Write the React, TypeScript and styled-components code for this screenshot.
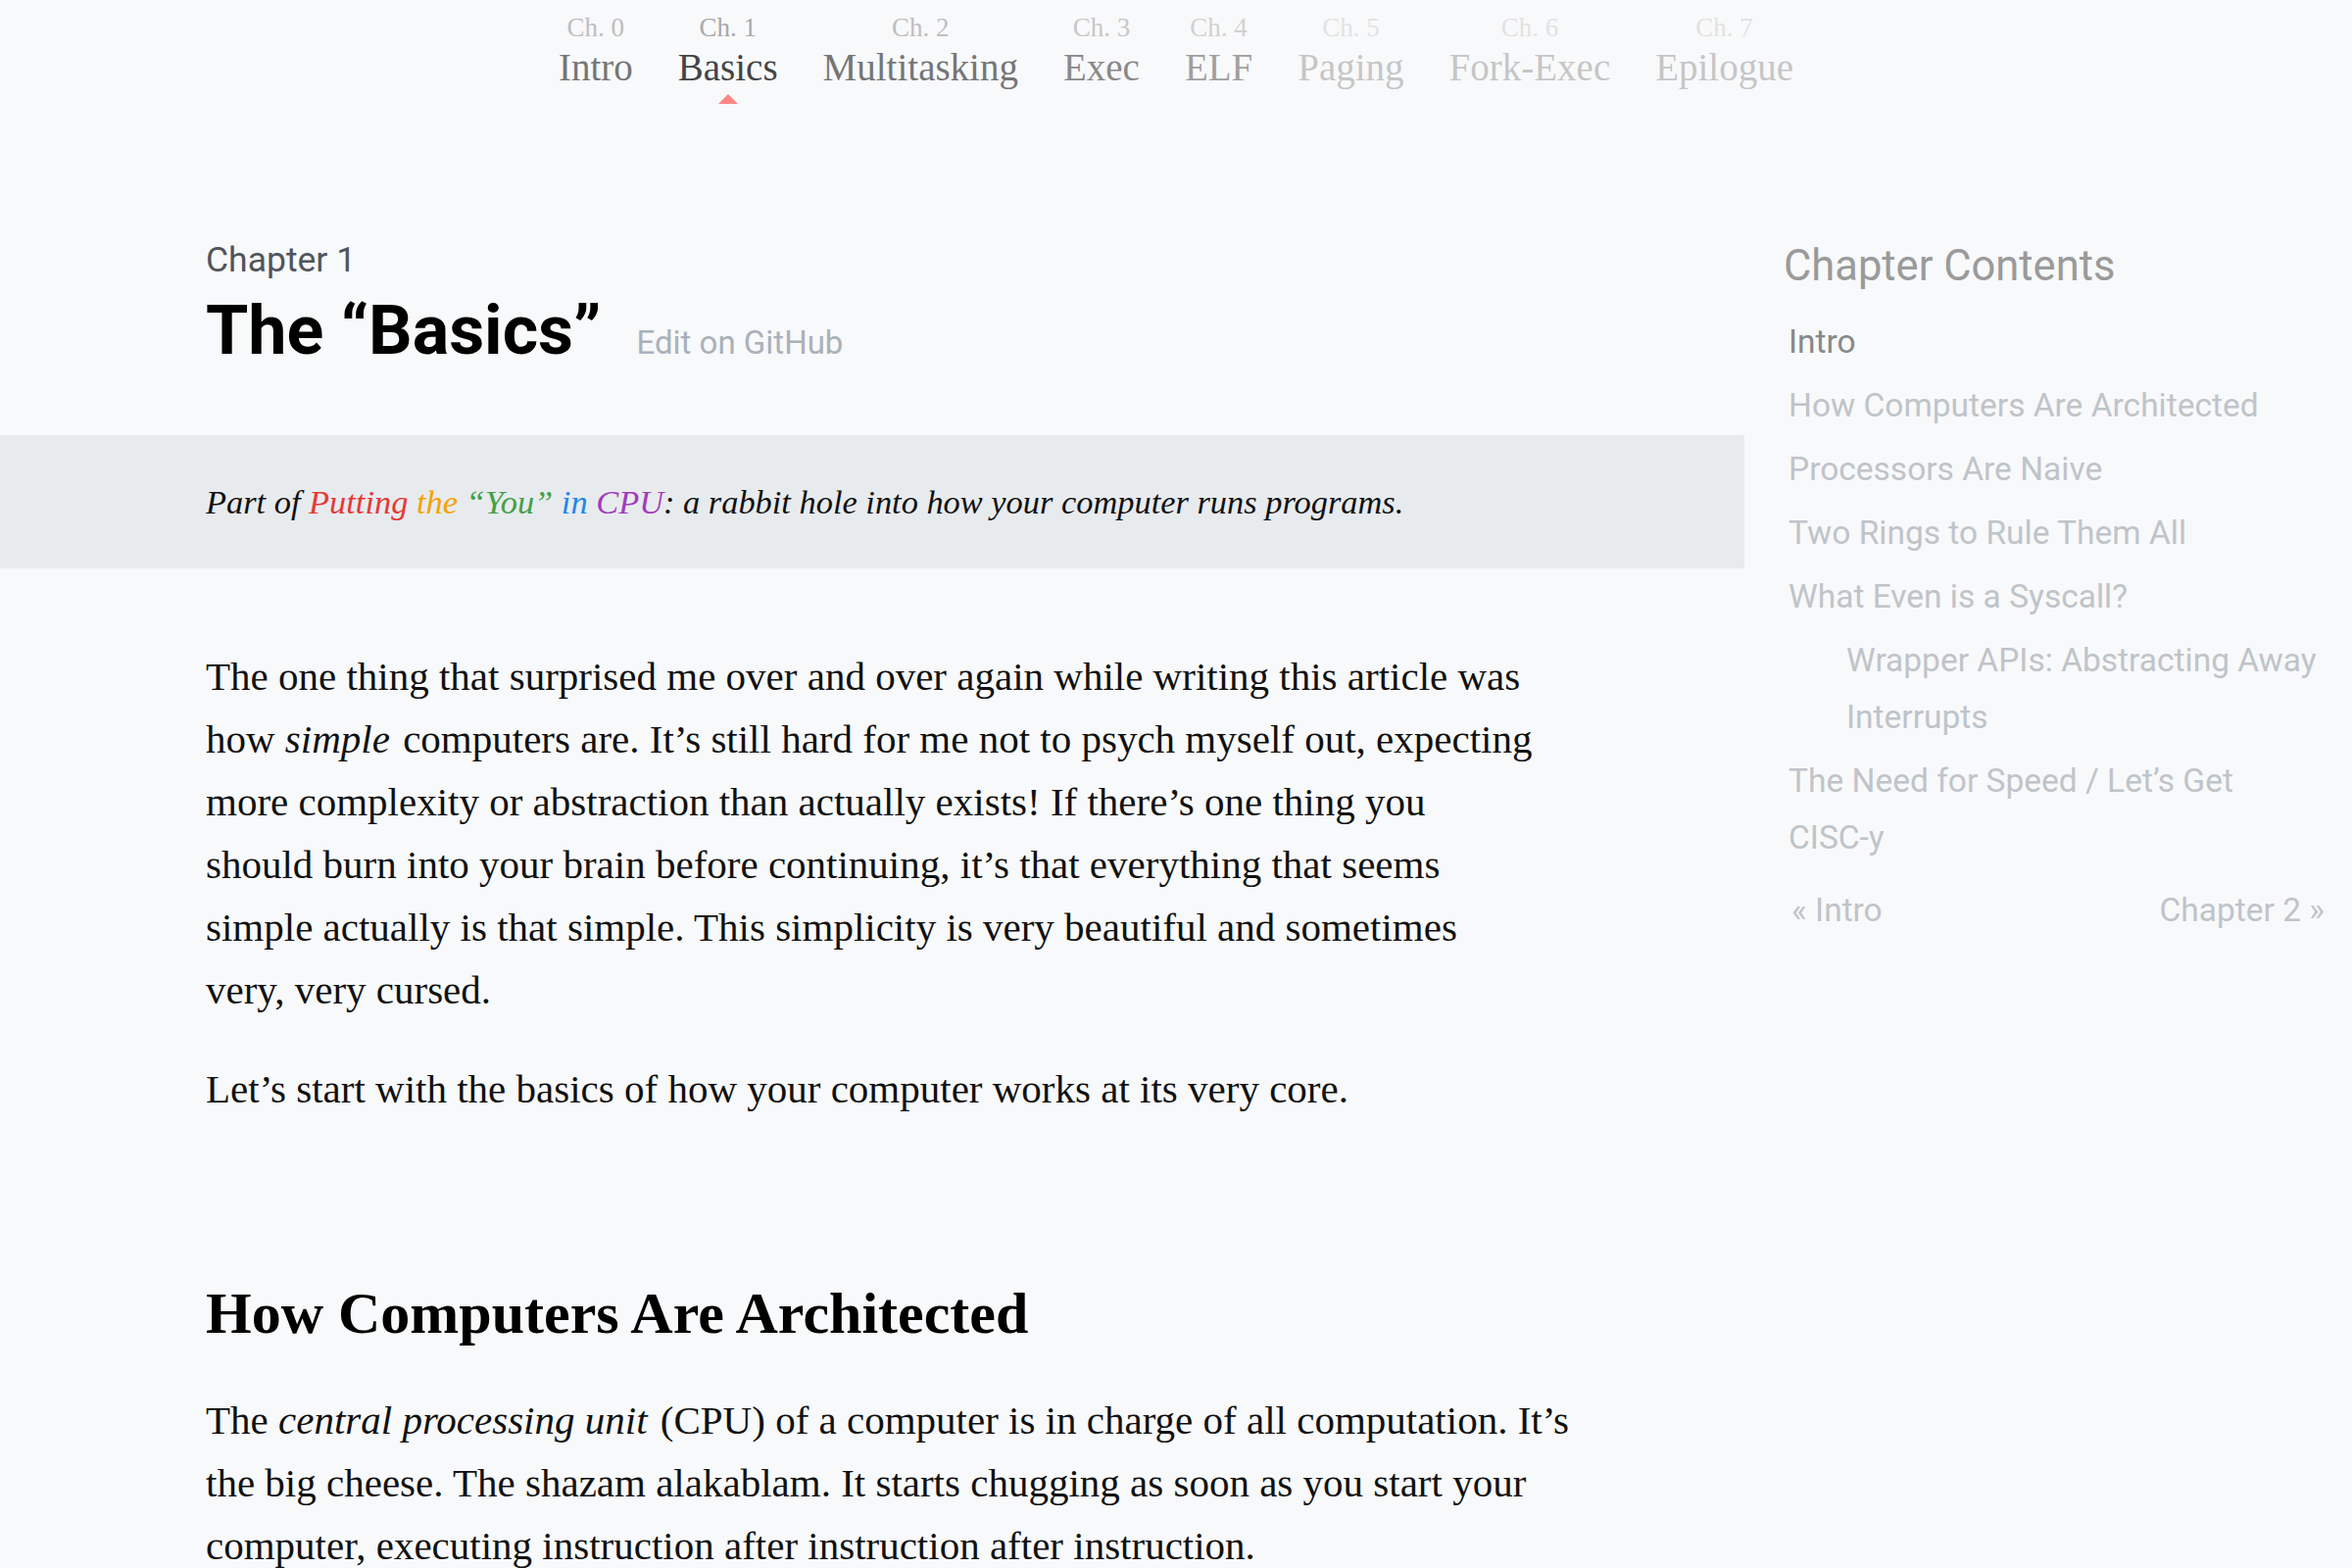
import React from "react";
import styled, { createGlobalStyle } from "styled-components";

const GlobalStyle = createGlobalStyle`
  html, body {
    margin: 0;
    background: #f8f9fa;
  }
  body {
    font-family: "Liberation Serif", "Times New Roman", serif;
    color: #111;
  }
`;

const chapters = [
  { num: "Ch. 0", title: "Intro" },
  { num: "Ch. 1", title: "Basics" },
  { num: "Ch. 2", title: "Multitasking" },
  { num: "Ch. 3", title: "Exec" },
  { num: "Ch. 4", title: "ELF" },
  { num: "Ch. 5", title: "Paging" },
  { num: "Ch. 6", title: "Fork-Exec" },
  { num: "Ch. 7", title: "Epilogue" },
];

const current = 1;

// the further a chapter is from the open one, the more it fades
const fadeFor = (i: number) => {
  const d = Math.abs(i - current);
  if (d === 0) return 1;
  if (d === 1) return 0.72;
  if (d === 2) return 0.61;
  if (d === 3) return 0.49;
  return 0.28;
};

const ChapterNav = styled.nav`
  display: flex;
  justify-content: center;
  gap: 46px;
  padding-top: 12px;
`;

const NavItem = styled.a<{ $fade: number }>`
  display: flex;
  flex-direction: column;
  align-items: center;
  text-decoration: none;
  opacity: ${(p) => p.$fade};
`;

const NavNum = styled.span`
  font-size: 27px;
  line-height: 32px;
  color: #a8a8a8;
`;

const NavTitle = styled.span`
  font-size: 39px;
  line-height: 50px;
  color: #444;
`;

const Marker = styled.span`
  width: 0;
  height: 0;
  margin-top: 2px;
  border-left: 10px solid transparent;
  border-right: 10px solid transparent;
  border-bottom: 10px solid #ff8585;
`;

const Layout = styled.div`
  display: grid;
  grid-template-columns: 1780px 1fr;
  margin-top: 139px;
`;

const Article = styled.main`
  min-width: 0;
`;

const Header = styled.header`
  padding: 0 210px;
`;

const Kicker = styled.div`
  font-family: Roboto, "Liberation Sans", sans-serif;
  font-size: 35.5px;
  line-height: 40px;
  color: #50555c;
`;

const TitleRow = styled.div`
  display: flex;
  align-items: baseline;
  gap: 36px;
  margin-top: 12px;
`;

const Title = styled.h1`
  margin: 0;
  font-family: Roboto, "Liberation Sans", sans-serif;
  font-weight: 700;
  font-size: 70px;
  line-height: 80px;
  color: #000;
`;

const EditLink = styled.a`
  font-family: Roboto, "Liberation Sans", sans-serif;
  font-size: 33px;
  color: #aab1b9;
  text-decoration: none;
`;

const Banner = styled.div`
  margin-top: 67px;
  padding: 46px 210px;
  background: #e8ebee;
  font-style: italic;
  font-size: 34.4px;
  line-height: 44px;
  color: #111;
`;

const Hue = styled.span<{ $c: string }>`
  color: ${(p) => p.$c};
`;

const Body = styled.div`
  padding: 78px 80px 0 210px;
  max-width: 1460px;
`;

const Para = styled.p`
  margin: 0 0 37px;
  font-size: 41px;
  line-height: 64px;

  em {
    padding-right: 3px;
  }
`;

const Section = styled.h2`
  margin: 165px 0 45px;
  font-size: 60px;
  line-height: 64px;
  font-weight: 700;
  color: #000;
`;

const Sidebar = styled.aside`
  padding: 0 28px 0 40px;
  font-family: Roboto, "Liberation Sans", sans-serif;
`;

const SideHeading = styled.h2`
  margin: 3px 0 0;
  font-size: 43.5px;
  line-height: 48px;
  font-weight: 400;
  color: #9a9a9a;
`;

const TocList = styled.ul`
  list-style: none;
  margin: 24px 0 0;
  padding: 0 0 0 5px;
`;

const TocItem = styled.li<{ $depth?: number; $current?: boolean }>`
  padding-left: ${(p) => (p.$depth ?? 0) * 59}px;
  margin-bottom: 7px;
  font-size: 33.5px;
  line-height: 58px;
  color: ${(p) => (p.$current ? "#888" : "#bfc4c9")};
`;

const NoBreak = styled.span`
  white-space: nowrap;
`;

const Pager = styled.div`
  display: flex;
  justify-content: space-between;
  margin-top: 16px;
  padding-left: 8px;
  font-size: 33.5px;
  line-height: 58px;
  color: #bfc4c9;
`;

const toc: { key: string; label: React.ReactNode; depth?: number; current?: boolean }[] = [
  { key: "intro", label: "Intro", current: true },
  { key: "arch", label: "How Computers Are Architected" },
  { key: "naive", label: "Processors Are Naive" },
  { key: "rings", label: "Two Rings to Rule Them All" },
  { key: "syscall", label: "What Even is a Syscall?" },
  { key: "wrappers", label: "Wrapper APIs: Abstracting Away Interrupts", depth: 1 },
  {
    key: "speed",
    label: (
      <>
        The Need for Speed / Let’s Get <NoBreak>CISC-y</NoBreak>
      </>
    ),
  },
];

export default function App() {
  return (
    <>
      <GlobalStyle />
      <ChapterNav>
        {chapters.map((c, i) => (
          <NavItem key={c.num} $fade={fadeFor(i)}>
            <NavNum>{c.num}</NavNum>
            <NavTitle>{c.title}</NavTitle>
            {i === current && <Marker />}
          </NavItem>
        ))}
      </ChapterNav>

      <Layout>
        <Article>
          <Header>
            <Kicker>Chapter 1</Kicker>
            <TitleRow>
              <Title>The “Basics”</Title>
              <EditLink>Edit on GitHub</EditLink>
            </TitleRow>
          </Header>

          <Banner>
            Part of <Hue $c="#e53935">Putting</Hue> <Hue $c="#f5a200">the</Hue>{" "}
            <Hue $c="#43a047">“You”</Hue> <Hue $c="#1e88e5">in</Hue>{" "}
            <Hue $c="#a23cbc">CPU</Hue>: a rabbit hole into how your computer runs
            programs.
          </Banner>

          <Body>
            <Para>
              The one thing that surprised me over and over again while writing this article was
              <br />
              how <em>simple</em> computers are. It’s still hard for me not to psych myself out, expecting
              <br />
              more complexity or abstraction than actually exists! If there’s one thing you
              <br />
              should burn into your brain before continuing, it’s that everything that seems
              <br />
              simple actually is that simple. This simplicity is very beautiful and sometimes
              <br />
              very, very cursed.
            </Para>
            <Para>
              Let’s start with the basics of how your computer works at its very core.
            </Para>

            <Section>How Computers Are Architected</Section>

            <Para>
              The <em>central processing unit</em> (CPU) of a computer is in charge of all computation. It’s
              <br />
              the big cheese. The shazam alakablam. It starts chugging as soon as you start your
              <br />
              computer, executing instruction after instruction after instruction.
            </Para>
          </Body>
        </Article>

        <Sidebar>
          <SideHeading>Chapter Contents</SideHeading>
          <TocList>
            {toc.map((t) => (
              <TocItem key={t.key} $depth={t.depth} $current={t.current}>
                {t.label}
              </TocItem>
            ))}
          </TocList>
          <Pager>
            <span>« Intro</span>
            <span>Chapter 2 »</span>
          </Pager>
        </Sidebar>
      </Layout>
    </>
  );
}
